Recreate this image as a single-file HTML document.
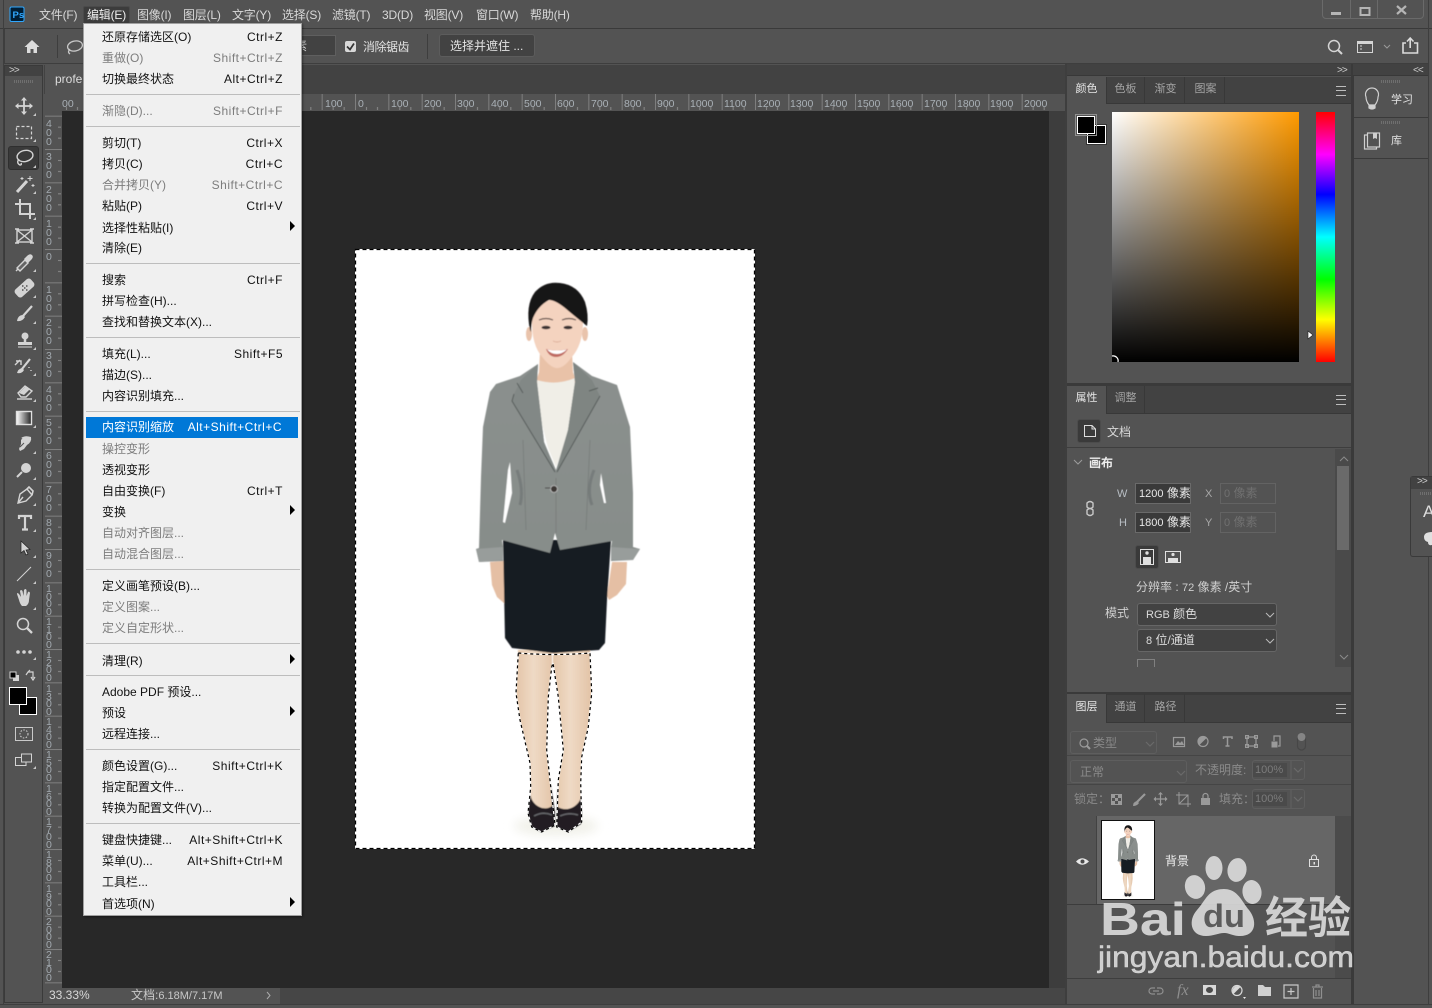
<!DOCTYPE html>
<html><head><meta charset="utf-8"><title>Photoshop</title>
<style>
html,body{margin:0;padding:0;background:#535353}
body{width:1432px;height:1008px;position:relative;overflow:hidden;font-family:"Liberation Sans","Noto Sans CJK SC",sans-serif;font-size:12px;color:#d8d8d8}
.a{position:absolute}
.t{position:absolute;white-space:nowrap;line-height:14px;height:14px}
svg{position:absolute;left:0;top:0;overflow:visible}
svg text{font-family:"Liberation Sans","Noto Sans CJK SC",sans-serif}
#menu{position:absolute;left:83px;top:23px;width:217px;height:891px;background:#f0f0f0;border:1px solid #a0a0a0;box-shadow:1px 1px 2px rgba(0,0,0,.4);z-index:20}
.m{position:absolute;left:0;margin-top:1px;width:181px;height:20px;line-height:20px;padding:0 17px 0 18px;color:#111;display:flex;justify-content:space-between;white-space:nowrap}
.m span+span{letter-spacing:.5px}
.m.x{color:#7d7d7d}
.m.h{background:#0078d7;color:#fff;left:2px;margin-top:0;width:180px;padding:0 16px 0 16px;height:21px;line-height:21px}
.s{position:absolute;left:2px;width:214px;height:1px;background:#bdbdbd}
.r{position:absolute;left:206px;width:0;height:0;border-left:5px solid #000;border-top:5px solid transparent;border-bottom:5px solid transparent}
.tab{position:absolute;height:27px;border-right:1px solid #383838;line-height:24px;text-align:center;color:#a4a4a4;width:38px;font-size:11px;text-indent:1px}
.tab.on{background:#535353;color:#e6e6e6;width:39px;text-indent:0}
.inp{position:absolute;height:19px;border:1px solid #6a6a6a;background:#3a3a3a;color:#e8e8e8;line-height:19px;padding-left:3px;box-sizing:content-box;white-space:nowrap;overflow:hidden;width:51px}
.inp.o{background:#535353;border-color:#636363;color:#707070}
.inp b{font-weight:normal;font-size:11px}
.sel{position:absolute;background:#424242;border:1px solid #666;border-radius:3px;height:21px;line-height:21px;box-sizing:content-box;color:#dcdcdc;padding-left:8px;white-space:nowrap}
.ham{position:absolute;width:10px;height:8px;border-top:1px solid #bdbdbd;border-bottom:1px solid #bdbdbd}
.ham:after{content:"";position:absolute;left:0;right:0;top:3px;height:1px;background:#bdbdbd}
.grip{position:absolute;width:19px;height:3px;background:repeating-linear-gradient(to right,#6f6f6f 0 1px,transparent 1px 2px)}
</style></head><body>

<!-- chrome backgrounds -->
<div class="a" style="left:0;top:0;width:1432px;height:28px;background:#535353;border-bottom:1px solid #3a3a3a"></div>
<div class="a" style="left:4px;top:29px;width:1424px;height:34px;background:#535353;border:1px solid #3e3e3e;border-width:0 0 1px 1px"></div>
<div class="a" style="left:44px;top:65px;width:1021px;height:29px;background:#424242"></div>
<div class="a" style="left:45px;top:65px;width:60px;height:29px;background:#535353"></div>
<div class="a" style="left:62px;top:111px;width:987px;height:877px;background:#282828"></div>
<div class="a" style="left:1049px;top:111px;width:16px;height:877px;background:#3d3d3d"></div>
<div class="a" style="left:45px;top:988px;width:1020px;height:16px;background:#535353"></div>
<div class="a" style="left:280px;top:988px;width:785px;height:16px;background:#464646"></div>

<!-- toolbar -->
<div class="a" style="left:4px;top:65px;width:39px;height:11px;background:#424242"></div>
<div class="a" style="left:4px;top:65px;width:39px;height:938px;border:1px solid #3a3a3a;box-sizing:border-box"></div>
<div class="a" style="left:8px;top:146px;width:31px;height:24px;background:#3a3a3a;border-radius:3px;border:1px solid #2f2f2f;box-sizing:border-box"></div>
<div class="grip" style="left:14px;top:80px"></div>
<div class="t" style="left:9px;top:64px;font-size:10px;color:#ccc;letter-spacing:-1px">&gt;&gt;</div>

<!-- rulers -->
<svg width="1432" height="1008" style="z-index:1">
<defs>
<pattern id="hr" patternUnits="userSpaceOnUse" x="355" y="94" width="33.333" height="17"><rect x="0" width="1" height="17" fill="#7e7e7e"/><rect x="11" y="13" width="1" height="3" fill="#8a8a8a"/><rect x="22" y="13" width="1" height="3" fill="#8a8a8a"/></pattern>
<pattern id="vr" patternUnits="userSpaceOnUse" x="45" y="249" width="17" height="33.333"><rect y="0" width="17" height="1" fill="#7e7e7e"/><rect y="11" x="13" width="3" height="1" fill="#8a8a8a"/><rect y="22" x="13" width="3" height="1" fill="#8a8a8a"/></pattern>
</defs>
<rect x="45" y="94" width="1020" height="17" fill="#535353"/>
<rect x="45" y="94" width="17" height="893" fill="#535353"/>
<rect x="62" y="94" width="987" height="16" fill="url(#hr)"/>
<rect x="45" y="111" width="17" height="876" fill="url(#vr)"/>
<g font-size="10.5" fill="#a9b0b6">
<text x="62" y="107">00</text><text x="325" y="107">100</text><text x="358" y="107">0</text><text x="391" y="107">100</text><text x="424" y="107">200</text><text x="457" y="107">300</text><text x="491" y="107">400</text><text x="524" y="107">500</text><text x="557" y="107">600</text><text x="591" y="107">700</text><text x="624" y="107">800</text><text x="657" y="107">900</text><text x="690" y="107">1000</text><text x="724" y="107">1100</text><text x="757" y="107">1200</text><text x="790" y="107">1300</text><text x="824" y="107">1400</text><text x="857" y="107">1500</text><text x="890" y="107">1600</text><text x="924" y="107">1700</text><text x="957" y="107">1800</text><text x="990" y="107">1900</text><text x="1024" y="107">2000</text>
</g>
<g font-size="10.5" fill="#a2a9af">
<text x="46 46 46" y="127 136 145">400</text>
<text x="46 46 46" y="160 169 178">300</text>
<text x="46 46 46" y="193 202 211">200</text>
<text x="46 46 46" y="227 236 245">100</text>
<text x="46" y="260">0</text>
<text x="46 46 46" y="293 302 311">100</text>
<text x="46 46 46" y="326 335 344">200</text>
<text x="46 46 46" y="359 368 377">300</text>
<text x="46 46 46" y="393 402 411">400</text>
<text x="46 46 46" y="426 435 444">500</text>
<text x="46 46 46" y="459 468 477">600</text>
<text x="46 46 46" y="493 502 511">700</text>
<text x="46 46 46" y="526 535 544">800</text>
<text x="46 46 46" y="559 568 577">900</text>
<text x="46 46 46 46" y="592 600 607 615">1000</text>
<text x="46 46 46 46" y="625 633 640 648">1100</text>
<text x="46 46 46 46" y="658 666 673 681">1200</text>
<text x="46 46 46 46" y="692 700 707 715">1300</text>
<text x="46 46 46 46" y="725 733 740 748">1400</text>
<text x="46 46 46 46" y="758 766 773 781">1500</text>
<text x="46 46 46 46" y="792 800 807 815">1600</text>
<text x="46 46 46 46" y="825 833 840 848">1700</text>
<text x="46 46 46 46" y="858 866 873 881">1800</text>
<text x="46 46 46 46" y="892 900 907 915">1900</text>
<text x="46 46 46 46" y="925 933 940 948">2000</text>
<text x="46 46 46 46" y="958 966 973 981">2100</text>
</g>
</svg>
<div class="t" style="left:55px;top:72px;color:#dcdcdc">profe</div>

<!-- document image -->
<div class="a" style="left:356px;top:250px;width:398px;height:598px;background:#fff;z-index:2"></div>
<svg width="1432" height="1008" style="z-index:3">
<defs>
<filter id="bl" x="-5%" y="-5%" width="110%" height="110%"><feGaussianBlur stdDeviation="0.45"/></filter>
<filter id="bl2" x="-20%" y="-50%" width="140%" height="200%"><feGaussianBlur stdDeviation="5"/></filter>
<linearGradient id="leg" x1="0" y1="0" x2="1" y2="0"><stop offset="0" stop-color="#e3c5a8"/><stop offset=".45" stop-color="#efdac5"/><stop offset="1" stop-color="#e2c3a6"/></linearGradient>
<linearGradient id="jk" x1="0" y1="0" x2="0" y2="1"><stop offset="0" stop-color="#8b908e"/><stop offset="1" stop-color="#878d8a"/></linearGradient>
<g id="woman">
<ellipse cx="556" cy="826" rx="42" ry="10" fill="#f1f1ea" filter="url(#bl2)"/>
<g filter="url(#bl)">
<!-- legs -->
<path d="M518 650 L552 650 L552 667 L548.500 697 L546.800 750 L550 780 L555 812 L530 812 L530.700 787 L530 763 L520 720 L516 693Z" fill="url(#leg)"/>
<path d="M553 650 L590 650 L591.700 693 L588 727 L581.500 757 L580.500 783 L581 812 L557 812 L558.500 780 L563.300 750 L558.300 697 L553 663Z" fill="url(#leg)"/>
<!-- shoes -->
<path d="M530.500 795 C532 806 545 812 552 806 L551 785 L555 812 L555 826 L541 832 L532 827 L528 813Z" fill="#201f22"/>
<path d="M557 788 L558 807 C566 812 577 808 581 798 L582 813 L581 824 L568 832 L557 827Z" fill="#201f22"/>
<path d="M534 816 Q543 811 552 815 M560 816 Q569 812 578 815" stroke="#66666a" stroke-width="1.500" fill="none"/>
<!-- hands -->
<path d="M490 562 L504 561 L509 580 L511 594 L509 607 L505 604 L497 597 L492 585Z" fill="#e5bfa4"/>
<path d="M612 562 L627 562 L626 584 L617 595 L609 600 L607 596Z" fill="#e5bfa4"/>
<!-- skirt -->
<path d="M503 540 L611 540 L607 600 L605 643 L599 650 L553 653 L512 648 L505 638Z" fill="#161a22"/>
<!-- neck and blouse -->
<path d="M540 352 L572 352 L573 372 L576 382 L556 392 L536 382 L539 372Z" fill="#e9c2a8"/>
<path d="M537 380 Q556 386 575 378 L571 430 L556 467 L548 448 L541 420Z" fill="#f0eee7"/>
<!-- jacket -->
<path d="M538 364 L520 376 L496 384 L490 392 L483 427 L481 477 L479 548 L476 549 L479 562 L503 561 L503 547 L502 540 L550 553 L555 533 L560 550 L612 541 L611 547 L611 561 L633 560 L640 549 L633 547 L633 493 L630 427 L617 385 L592 376 L573 362 L575 382 L568 430 L556 470 L544 442 L537 382Z" fill="url(#jk)"/>
<path d="M510 462 L512 493 L505 523 L503 522 L508 470Z M601 473 L606 503 L604 503 L600 485Z" fill="#fff"/>
<path d="M538 364 L521 380 L514 394 L512 401 L556 474 L544 442 L537 382Z" fill="#828886"/>
<path d="M573 362 L592 380 L598 392 L600 396 L556 474 L568 430 L575 382Z" fill="#7f8582"/>
<path d="M514 394 L512 401 L555 472 M600 396 L557 472 M517 383 L523 393 M598 388 L589 391" stroke="#565b5a" stroke-width="1" fill="none"/>
<path d="M517 470 Q524 490 520 505 M594 470 Q586 490 592 505" stroke="#6f7573" stroke-width="3" fill="none" opacity=".7"/>
<path d="M556 478 L556 533 M523 440 L526 530 M590 440 L586 530" stroke="#6a706e" stroke-width=".8" fill="none" opacity=".6"/>
<path d="M545 488 L551 488" stroke="#444" stroke-width="1"/>
<circle cx="554" cy="489" r="3.500" fill="#3c3834" stroke="#d8d8d8" stroke-width=".6"/>
<path d="M476 549 L503 547 L503 560 L479 562Z M611 547 L640 549 L633 560 L611 560Z" fill="#989d9b"/>
<!-- head -->
<ellipse cx="529" cy="334" rx="3" ry="7" fill="#e9c3ab"/>
<ellipse cx="585" cy="334" rx="3" ry="7" fill="#e9c3ab"/>
<path d="M532 318 Q531 345 543 358 Q551 368 557 368 Q564 368 571 358 Q583 345 583 322 Q570 295 550 300 Q535 305 532 318Z" fill="#f4d3bf"/>
<path d="M530 330 Q525 305 535 292 Q545 281 560 283 Q578 285 585 302 Q589 315 587 326 L582 322 Q572 314 565 308 Q555 300 549 300 Q538 306 533 318 Q531 324 531 332Z" fill="#191415"/>
<ellipse cx="546" cy="327.500" rx="4.500" ry="1.800" fill="#3a3030"/>
<ellipse cx="568" cy="327.500" rx="4.500" ry="1.800" fill="#3a3030"/>
<path d="M539 320 Q546 317 553 320 M562 320 Q569 317 576 320" stroke="#5a4a45" stroke-width="1.200" fill="none"/>
<path d="M546 349 Q557 352 568 349 Q563 357 556 357 Q549 357 546 349Z" fill="#bf6a62"/>
<path d="M547 349.500 Q557 351.500 567 349.500 Q562 354 557 354 Q551 354 547 349.500Z" fill="#fff"/>
<path d="M553 341 Q557 343 561 341" stroke="#dcae98" stroke-width=".9" fill="none"/>
</g>
</g>
</defs>
<use href="#woman"/>
<!-- marching ants -->
<path d="M518.300 653 Q553 656 590 653 L591.700 693 L588.300 727 L581.700 757 L580.700 783 L581.700 822 L568.300 832 L556.700 827 L558.300 780 L563.300 750 L558.300 697 L553 663 L551.700 667 L548.300 697 L546.700 750 L550 780 L555 825 L541.700 832 L531.700 827 L528 813 L530.700 787 L530 763 L520 720 L516 693Z" fill="none" stroke="#fff" stroke-width="1.200"/>
<path d="M518.300 653 Q553 656 590 653 L591.700 693 L588.300 727 L581.700 757 L580.700 783 L581.700 822 L568.300 832 L556.700 827 L558.300 780 L563.300 750 L558.300 697 L553 663 L551.700 667 L548.300 697 L546.700 750 L550 780 L555 825 L541.700 832 L531.700 827 L528 813 L530.700 787 L530 763 L520 720 L516 693Z" fill="none" stroke="#000" stroke-width="1.200" stroke-dasharray="3 3"/>
<rect x="355.500" y="249.500" width="399" height="599" fill="none" stroke="#fff"/>
<rect x="355.500" y="249.500" width="399" height="599" fill="none" stroke="#000" stroke-width="1.300" stroke-dasharray="4 3"/>
</svg>

<!-- menu bar -->
<svg width="24" height="24"><rect x="10" y="7" width="14" height="14.500" rx="1.500" fill="#001e36" stroke="#31a8ff" stroke-width="1"/><text x="12.500" y="18" font-size="9.500" font-weight="bold" fill="#31a8ff">Ps</text></svg>
<div class="a" style="left:83px;top:6px;width:47px;height:18px;background:#3c3c3c;border:1px solid #4a4a4a;box-sizing:border-box;border-radius:2px"></div>
<div class="t" style="left:39px;top:8px;letter-spacing:-.2px">文件(F)</div>
<div class="t" style="left:87px;top:8px;color:#eee;letter-spacing:-.2px">编辑(E)</div>
<div class="t" style="left:137px;top:8px;letter-spacing:-.2px">图像(I)</div>
<div class="t" style="left:183px;top:8px;letter-spacing:-.2px">图层(L)</div>
<div class="t" style="left:232px;top:8px;letter-spacing:-.2px">文字(Y)</div>
<div class="t" style="left:282px;top:8px;letter-spacing:-.2px">选择(S)</div>
<div class="t" style="left:332px;top:8px;letter-spacing:-.2px">滤镜(T)</div>
<div class="t" style="left:382px;top:8px;letter-spacing:-.2px">3D(D)</div>
<div class="t" style="left:424px;top:8px;letter-spacing:-.2px">视图(V)</div>
<div class="t" style="left:476px;top:8px;letter-spacing:-.2px">窗口(W)</div>
<div class="t" style="left:530px;top:8px;letter-spacing:-.2px">帮助(H)</div>

<!-- window controls -->
<div class="a" style="left:1322px;top:-2px;width:102px;height:21px;border:1px solid #6a6a6a;border-radius:0 0 4px 4px;box-sizing:border-box"></div>
<div class="a" style="left:1350px;top:0;width:1px;height:18px;background:#6a6a6a"></div>
<div class="a" style="left:1377px;top:0;width:1px;height:18px;background:#6a6a6a"></div>
<svg width="1432" height="30">
<rect x="1331" y="12" width="10" height="3" fill="#b5b5b5"/>
<rect x="1360.500" y="8" width="9" height="7" fill="none" stroke="#b5b5b5" stroke-width="2"/>
<path d="M1397 6 L1406 14 M1406 6 L1397 14" stroke="#b5b5b5" stroke-width="2.200"/>
</svg>

<!-- options bar -->
<svg width="1432" height="70">
<path d="M24.500 47 L32 40 L39.500 47 H37 V53 H33.500 V49 H30.500 V53 H27 V47Z" fill="#dcdcdc"/>
<rect x="57" y="35" width="1" height="23" fill="#3e3e3e"/>
<ellipse cx="75" cy="46" rx="7.500" ry="5" fill="none" stroke="#c8c8c8" stroke-width="1.300" transform="rotate(-12 75 46)"/>
<path d="M70 49 Q67 52 70 54" fill="none" stroke="#c8c8c8" stroke-width="1.300"/>
<rect x="427" y="34" width="1" height="25" fill="#3e3e3e"/>
<circle cx="1334" cy="46" r="5.500" fill="none" stroke="#d4d4d4" stroke-width="1.500"/>
<path d="M1338 50 L1342 54" stroke="#d4d4d4" stroke-width="2"/>
<rect x="1357.500" y="41.500" width="15" height="11" fill="none" stroke="#d4d4d4" stroke-width="1"/><rect x="1358" y="42" width="15" height="2" fill="#d4d4d4"/>
<path d="M1360 46 h2 M1360 49 h2" stroke="#d4d4d4"/>
<path d="M1384 45 L1387 48 L1390 45" fill="none" stroke="#9a9a9a" stroke-width="1"/>
<path d="M1406 43 H1403 V53 H1417.500 V43 H1414 M1410.200 48 V39 M1407 41.500 L1410.200 38 L1413.500 41.500" fill="none" stroke="#dcdcdc" stroke-width="1.600"/>
</svg>
<div class="a" style="left:295px;top:35px;width:41px;height:21px;background:#424242;border:1px solid #5f5f5f;box-sizing:border-box"></div>
<div class="t" style="left:295px;top:39px">素</div>
<div class="a" style="left:345px;top:41px;width:11px;height:11px;background:#d8d8d8;border-radius:2px"></div>
<svg width="1432" height="70"><path d="M347 46.500 L350 49.500 L354 43.500" fill="none" stroke="#333" stroke-width="1.700"/></svg>
<div class="t" style="left:363px;top:40px;color:#e0e0e0;letter-spacing:-.5px">消除锯齿</div>
<div class="a" style="left:439px;top:34px;width:96px;height:23px;background:#424242;border:1px solid #5c5c5c;border-radius:3px;box-sizing:border-box"></div>
<div class="t" style="left:450px;top:39px;color:#e4e4e4">选择并遮住 ...</div>

<!-- tool icons -->
<svg width="60" height="780" fill="none" stroke="#d4d4d4" stroke-width="1.400">
<!-- move -->
<path d="M24 98 V114 M16 106 H32" stroke-width="1.800"/><path d="M24 97 L21 100.500 H27Z M24 115 L21 111.500 H27Z M15 106 L18.500 103 V109Z M33 106 L29.500 103 V109Z" fill="#d4d4d4" stroke="none"/>
<!-- marquee -->
<rect x="16.500" y="126.500" width="15" height="12" stroke-dasharray="3 2" stroke-width="1.200"/>
<!-- lasso -->
<ellipse cx="25" cy="156" rx="8" ry="5.500" transform="rotate(-12 25 156)"/><path d="M19 159 Q16 163 20 165 Q22 165 21 163"/>
<!-- wand -->
<path d="M17 192 L27 181" stroke-width="3"/><path d="M30 176 v5 M27.500 178.500 h5 M22 177 v3 M20.500 178.500 h3 M33 184 v3 M31.500 185.500 h3" stroke-width="1"/>
<!-- crop -->
<path d="M15 204 H30 V219 M20 199 V214 H35" stroke-width="2"/>
<!-- frame -->
<rect x="17" y="230" width="15" height="12"/><path d="M17 230 L32 242 M32 230 L17 242"/><path d="M15 229 h4 M30 229 h4 M15 243 h4 M30 243 h4" stroke-width="1.500"/>
<!-- eyedropper -->
<path d="M18 269 L16 271 M17 268 L25 260 L28 263 L20 271 Z" fill="#d4d4d4" fill-opacity=".15"/><path d="M24 259 L27 256 Q30 253 32 255 Q34 257 31 260 L28 263Z" fill="#d4d4d4" stroke="none"/>
<!-- heal -->
<rect x="14" y="283" width="21" height="10" rx="3" transform="rotate(-42 24.500 288)" fill="#d4d4d4" stroke="none"/>
<path d="M22 286 h1.500 M26 286 h1.500 M22 290 h1.500 M26 290 h1.500 M24 288 h1.500" stroke="#535353" stroke-width="1.600"/>
<!-- brush -->
<path d="M32 306 L23 316" stroke-width="2.200"/><path d="M23 315 Q18 315 17 321 Q22 322 25 317Z" fill="#d4d4d4" stroke="none"/>
<!-- stamp -->
<circle cx="25" cy="336" r="3.500" fill="#d4d4d4" stroke="none"/><path d="M25 338 v4" stroke-width="2.500"/><rect x="18" y="342" width="14" height="3" fill="#d4d4d4" stroke="none"/><path d="M18 347 h14" stroke-width="1"/>
<!-- history -->
<path d="M30 359 L22 369" stroke-width="2.200"/><path d="M22 368 Q18 369 17 373 Q22 374 24 370Z" fill="#d4d4d4" stroke="none"/><path d="M15 365 L20 360 M16 361 h5 v4"/><path d="M29 367 v1 M31 370 v1" stroke-dasharray="1 2"/>
<!-- eraser -->
<path d="M18 393 L25 386 L32 391 L26 397 H21Z" /><path d="M18 393 L25 386 L29 389 L23 395Z" fill="#d4d4d4" stroke="none" transform="translate(1 0)"/><path d="M17 399 H32"/>
<!-- gradient -->
<defs><linearGradient id="gr" x1="0" x2="1"><stop offset="0" stop-color="#fff"/><stop offset="1" stop-color="#222"/></linearGradient></defs>
<rect x="16.500" y="411.500" width="15" height="13" fill="url(#gr)" stroke="#e0e0e0"/>
<!-- smudge -->
<path d="M21 438 Q25 435 31 437 Q32 442 27 445 L24 449 L20 451 L19 449 L21 444Z" fill="#d4d4d4" stroke="none"/><path d="M19 442 L22 438 M20 447 L24 443" stroke="#535353" stroke-width="1"/>
<!-- dodge -->
<circle cx="26" cy="468" r="5" fill="#d4d4d4" stroke="none"/><path d="M22 472 L17 477" stroke-width="2"/>
<!-- pen -->
<path d="M18 503 L20 494 L27 489 L32 495 L26 501 Z M18 503 L23 497"/><path d="M27 489 L29 487 L33 491 L32 495" stroke-width="1.600"/>
<!-- T -->
<path d="M19 519 V516 H31 V519 M25 516 V529 M22 529.500 H28" stroke-width="2.200"/>
<!-- path sel -->
<path d="M21 541 L21 553 L24 550.500 L26 555 L28 554 L26 550 L30 549.500Z" fill="#d4d4d4" stroke="#222" stroke-width=".7"/>
<!-- line -->
<path d="M17 581 L31 567" stroke-width="1"/>
<!-- hand -->
<path d="M19 600 L17 594 Q17 592 19 594 L21 597 L20 591 Q21 589 22.500 591 L23.500 596 L24 590 Q25.500 588 26.500 590 L26.500 596 L28 592 Q29.500 591 30 593 L29 600 Q29 604 26 606 H22 Q20 604 19 600Z" fill="#d4d4d4" stroke="none"/>
<!-- zoom -->
<circle cx="23" cy="624" r="5.500" stroke-width="1.500"/><path d="M27 628 L32 633" stroke-width="2.300"/>
<!-- dots -->
<circle cx="18" cy="652" r="1.800" fill="#d4d4d4" stroke="none"/><circle cx="24" cy="652" r="1.800" fill="#d4d4d4" stroke="none"/><circle cx="30" cy="652" r="1.800" fill="#d4d4d4" stroke="none"/>
<!-- defaults -->
<rect x="13" y="675" width="6" height="6" fill="#d4d4d4" stroke="none"/><rect x="10" y="672" width="6" height="6" fill="#000" stroke="#d4d4d4" stroke-width="1"/>
<path d="M28 672 H33 V678 M26 675 L28 672 L30 670 M31 677 L33 680 L35 677" stroke-width="1.200"/>
<!-- quick mask -->
<rect x="15.500" y="727.500" width="17" height="13" stroke="#c9c9c9" stroke-width="1"/><circle cx="24" cy="734" r="4" stroke-dasharray="1.500 1.500" stroke-width="1"/>
<!-- screen -->
<rect x="21.500" y="754" width="10" height="8" stroke-width="1"/><path d="M21 757.500 H15.500 V765.500 H26 V762" stroke-width="1"/>
</svg>
<svg width="60" height="780"><g fill="#c8c8c8">
<path d="M36 113 l-3 3 h3Z M36 139 l-3 3 h3Z M36 165 l-3 3 h3Z M36 191 l-3 3 h3Z M36 217 l-3 3 h3Z M36 269 l-3 3 h3Z M36 295 l-3 3 h3Z M36 321 l-3 3 h3Z M36 347 l-3 3 h3Z M36 373 l-3 3 h3Z M36 399 l-3 3 h3Z M36 425 l-3 3 h3Z M36 451 l-3 3 h3Z M36 477 l-3 3 h3Z M36 503 l-3 3 h3Z M36 529 l-3 3 h3Z M36 555 l-3 3 h3Z M36 581 l-3 3 h3Z M36 607 l-3 3 h3Z M36 657 l-3 3 h3Z M36 766 l-3 3 h3Z"/></g></svg>
<div class="a" style="left:19px;top:697px;width:18px;height:18px;background:#000;border:1px solid #fff;box-sizing:border-box"></div>
<div class="a" style="left:9px;top:687px;width:18px;height:18px;background:#000;border:1px solid #fff;box-sizing:border-box"></div>

<!-- status bar -->
<div class="t" style="left:49px;top:988px;color:#d8d8d8">33.33%</div>
<div class="t" style="left:131px;top:988px;color:#c8c8c8">文档:<span style="font-size:11px">6.18M/7.17M</span></div>
<svg width="1432" height="1008"><path d="M267 992 L270 995.500 L267 999" fill="none" stroke="#aaa"/></svg>

<!-- right dock -->
<div class="a" style="left:1065px;top:64px;width:367px;height:944px;background:#535353"></div>
<div class="a" style="left:1065px;top:64px;width:363px;height:12px;background:#424242;border-bottom:1px solid #383838;box-sizing:border-box"></div>
<div class="a" style="left:1065px;top:64px;width:2px;height:940px;background:#3e3e3e"></div>
<div class="a" style="left:1351px;top:64px;width:2px;height:940px;background:#3a3a3a"></div>
<div class="a" style="left:1428px;top:0;width:1px;height:1004px;background:#3e3e3e"></div>
<div class="a" style="left:0;top:1004px;width:1432px;height:1px;background:#3e3e3e"></div>
<div class="a" style="left:3px;top:0;width:1px;height:1004px;background:#3e3e3e"></div>
<div class="t" style="left:1337px;top:64px;font-size:10px;color:#ccc;letter-spacing:-1px">&gt;&gt;</div>
<div class="t" style="left:1413px;top:64px;font-size:10px;color:#ccc;letter-spacing:-1px">&lt;&lt;</div>

<!-- color panel -->
<div class="a" style="left:1067px;top:77px;width:284px;height:27px;background:#424242;border-bottom:1px solid #383838;box-sizing:border-box"></div>
<div class="tab on" style="left:1067px;top:77px">颜色</div>
<div class="tab" style="left:1106px;top:77px">色板</div>
<div class="tab" style="left:1146px;top:77px">渐变</div>
<div class="tab" style="left:1186px;top:77px">图案</div>
<div class="ham" style="left:1336px;top:86px"></div>
<div class="a" style="left:1075px;top:114px;width:22px;height:22px;border:1px solid #909090;box-sizing:border-box;z-index:1"></div>
<div class="a" style="left:1087px;top:125px;width:19px;height:19px;background:#000;border:1px solid #fff;outline:1px solid #333;box-sizing:border-box"></div>
<div class="a" style="left:1077px;top:116px;width:18px;height:18px;background:#000;border:1px solid #fff;box-sizing:border-box"></div>
<div class="a" style="left:1112px;top:112px;width:187px;height:250px;background:linear-gradient(to top,#000,rgba(0,0,0,0)),linear-gradient(to right,#fff,#ff9a00)"></div>
<div class="a" style="left:1316px;top:112px;width:19px;height:250px;background:linear-gradient(to bottom,#f00 0,#f0f 17%,#00f 33%,#0ff 50%,#0f0 67%,#ff0 83%,#f00 100%)"></div>
<svg width="1432" height="400"><path d="M1308 331 L1313 335 L1308 339Z" fill="#fff" stroke="#222" stroke-width=".6"/><path d="M1112 356 A5 5 0 0 1 1118 362" fill="none" stroke="#fff" stroke-width="1.200"/></svg>
<div class="a" style="left:1067px;top:383px;width:284px;height:3px;background:#3a3a3a"></div>

<!-- learn/library -->
<div class="grip" style="left:1381px;top:80px"></div>
<div class="grip" style="left:1381px;top:121px"></div>
<div class="a" style="left:1354px;top:117px;width:74px;height:1px;background:#3a3a3a"></div>
<div class="a" style="left:1354px;top:158px;width:74px;height:1px;background:#3a3a3a"></div>
<div class="a" style="left:1353px;top:76px;width:1px;height:928px;background:#3a3a3a"></div>
<div class="t" style="left:1391px;top:93px;color:#e4e4e4;font-size:11px">学习</div>
<div class="t" style="left:1391px;top:134px;color:#e4e4e4;font-size:11px">库</div>
<svg width="1432" height="170" fill="none" stroke="#d0d0d0" stroke-width="1.200">
<path d="M1369 105 Q1366 101 1366 97 A6.500 6.500 0 1 1 1378 97 Q1378 101 1375 105Z"/><path d="M1369 106 h6 v2 q-3 2 -6 0Z" fill="#d0d0d0"/>
<rect x="1364.500" y="135" width="12" height="14"/><rect x="1367.500" y="133" width="12" height="14" fill="#535353"/><path d="M1373 133 h4 v6 l-2 -1 l-2 1Z" fill="#d0d0d0" stroke="none"/>
</svg>

<!-- properties -->
<div class="a" style="left:1067px;top:386px;width:284px;height:28px;background:#424242;border-bottom:1px solid #383838;box-sizing:border-box"></div>
<div class="tab on" style="left:1067px;top:386px;height:28px">属性</div>
<div class="tab" style="left:1106px;top:386px;height:27px">调整</div>
<div class="ham" style="left:1336px;top:395px"></div>
<div class="a" style="left:1077px;top:419px;width:24px;height:24px;background:#3a3a3a;border-radius:3px;border:1px solid #4c4c4c;box-sizing:border-box"></div>
<div class="t" style="left:1107px;top:425px">文档</div>
<div class="a" style="left:1067px;top:447px;width:284px;height:1px;background:#3e3e3e"></div>
<div class="a" style="left:1335px;top:449px;width:16px;height:218px;background:#4a4a4a"></div>
<div class="a" style="left:1337px;top:466px;width:12px;height:84px;background:#6a6a6a"></div>
<svg width="1432" height="680" fill="none" stroke="#dcdcdc">
<path d="M1084.500 425.500 H1092 L1095.500 429 V436.500 H1084.500Z M1092 425.500 V429 H1095.500"/>
<path d="M1087 503 Q1090 500 1093 503 V507 Q1090 510 1087 507Z M1087 510 Q1090 507 1093 510 V514 Q1090 517 1087 514Z" stroke-width="1.400" stroke="#c8c8c8"/>
<path d="M1074 460 L1078 464 L1082 460" stroke="#9c9c9c"/>
<path d="M1340 461 L1344 457 L1348 461 M1340 655 L1344 659 L1348 655" stroke="#8a8a8a"/>
</svg>
<div class="t" style="left:1089px;top:456px;font-weight:bold;color:#eee">画布</div>
<div class="t" style="left:1117px;top:487px;font-size:11px;color:#b8bec4">W</div>
<div class="inp" style="left:1135px;top:483px"><b>1200</b> 像素</div>
<div class="t" style="left:1205px;top:487px;font-size:11px;color:#a8a8a8">X</div>
<div class="inp o" style="left:1220px;top:483px"><b>0</b> 像素</div>
<div class="t" style="left:1119px;top:516px;font-size:11px;color:#b8bec4">H</div>
<div class="inp" style="left:1135px;top:512px"><b>1800</b> 像素</div>
<div class="t" style="left:1205px;top:516px;font-size:11px;color:#a8a8a8">Y</div>
<div class="inp o" style="left:1220px;top:512px"><b>0</b> 像素</div>
<div class="a" style="left:1135px;top:545px;width:24px;height:24px;background:#3a3a3a;border-radius:3px;border:1px solid #4c4c4c;box-sizing:border-box"></div>
<div class="t" style="left:1136px;top:580px;color:#cfcfcf">分辨率 : <span style="font-size:11px">72</span> 像素 /英寸</div>
<div class="t" style="left:1105px;top:606px;color:#cfcfcf">模式</div>
<div class="sel" style="left:1137px;top:603px;width:130px"><span style="font-size:11px">RGB</span> 颜色</div>
<div class="sel" style="left:1137px;top:629px;width:130px"><span style="font-size:11px">8</span> 位/通道</div>
<svg width="1432" height="680">
<rect x="1140.500" y="549.500" width="13" height="15" fill="none" stroke="#e0e0e0"/><circle cx="1147" cy="553" r="1.700" fill="#e0e0e0"/><path d="M1143 564 V557 H1151 V564Z" fill="#e0e0e0"/>
<rect x="1165.500" y="551.500" width="15" height="11" fill="none" stroke="#e0e0e0"/><circle cx="1173" cy="554.500" r="1.600" fill="#e0e0e0"/><path d="M1168 562 V558 H1178 V562Z" fill="#e0e0e0"/>
<path d="M1266 613 L1270 617 L1274 613 M1266 639 L1270 643 L1274 639" fill="none" stroke="#bbb"/>
<path d="M1137.500 667 V659.500 H1154.500 V667" fill="none" stroke="#808080"/>
</svg>

<!-- layers -->
<div class="a" style="left:1067px;top:692px;width:284px;height:3px;background:#3a3a3a"></div>
<div class="a" style="left:1067px;top:695px;width:284px;height:28px;background:#424242;border-bottom:1px solid #383838;box-sizing:border-box"></div>
<div class="tab on" style="left:1067px;top:694px;height:29px;line-height:26px">图层</div>
<div class="tab" style="left:1106px;top:694px;height:28px;line-height:26px">通道</div>
<div class="tab" style="left:1146px;top:694px;height:28px;line-height:26px">路径</div>
<div class="ham" style="left:1336px;top:704px"></div>
<div class="a" style="left:1070px;top:731px;width:87px;height:23px;border:1px solid #5e5e5e;border-radius:3px;box-sizing:border-box"></div>
<div class="t" style="left:1093px;top:736px;color:#888">类型</div>
<div class="a" style="left:1067px;top:755px;width:284px;height:1px;background:#454545"></div>
<div class="a" style="left:1070px;top:760px;width:117px;height:23px;border:1px solid #5e5e5e;border-radius:3px;box-sizing:border-box"></div>
<div class="t" style="left:1080px;top:765px;color:#8a8a8a">正常</div>
<div class="t" style="left:1195px;top:763px;color:#8a8a8a">不透明度:</div>
<div class="a" style="left:1252px;top:760px;width:53px;height:20px;border:1px solid #5e5e5e;border-radius:3px;box-sizing:border-box"></div>
<div class="a" style="left:1253px;top:763px;width:34px;height:14px;background:#4a4a4a;color:#7c7c7c;line-height:14px;padding-left:2px;font-size:11px;box-sizing:border-box">100%</div>
<div class="a" style="left:1067px;top:784px;width:284px;height:1px;background:#454545"></div>
<div class="t" style="left:1074px;top:792px;color:#8a8a8a">锁定：</div>
<div class="t" style="left:1219px;top:792px;color:#8a8a8a">填充：</div>
<div class="a" style="left:1252px;top:789px;width:53px;height:20px;border:1px solid #5e5e5e;border-radius:3px;box-sizing:border-box"></div>
<div class="a" style="left:1253px;top:792px;width:34px;height:14px;background:#4a4a4a;color:#7c7c7c;line-height:14px;padding-left:2px;font-size:11px;box-sizing:border-box">100%</div>
<div class="a" style="left:1097px;top:816px;width:238px;height:88px;background:#666"></div>
<div class="a" style="left:1335px;top:816px;width:16px;height:162px;background:#4b4b4b"></div>
<div class="a" style="left:1067px;top:904px;width:268px;height:1px;background:#3c3c3c"></div>
<div class="a" style="left:1096px;top:816px;width:1px;height:88px;background:#424242"></div>
<div class="a" style="left:1101px;top:820px;width:54px;height:80px;background:#fff;border:1px solid #111;box-sizing:border-box"></div>
<svg width="1432" height="1008"><use href="#woman" transform="translate(1102 821) scale(.13) translate(-356 -250)"/></svg>
<div class="t" style="left:1165px;top:854px;color:#eee">背景</div>
<div class="a" style="left:1067px;top:978px;width:284px;height:1px;background:#3e3e3e"></div>

<svg width="1432" height="1008">
<g fill="none" stroke="#9a9a9a" stroke-width="1.200">
<circle cx="1084" cy="743" r="4"/><path d="M1087 746 L1090 749" stroke-width="2"/>
<rect x="1173.500" y="737.500" width="11" height="9"/><path d="M1175 745 L1178 741 L1180 743 L1182 741 L1184 745Z" fill="#9a9a9a" stroke="none"/>
<circle cx="1203" cy="741.500" r="5"/><path d="M1203 736.500 A5 5 0 0 1 1203 746.500Z" transform="rotate(-135 1203 741.500)" fill="#9a9a9a" stroke="none"/>
<path d="M1223.500 739 V737 H1232 V739 M1227.500 737 V746 M1225.500 746 H1229.500" stroke-width="1.500"/>
<rect x="1247" y="737" width="9" height="9"/><path d="M1245.500 735.500 h3 v3 h-3Z M1254.500 735.500 h3 v3 h-3Z M1245.500 744.500 h3 v3 h-3Z M1254.500 744.500 h3 v3 h-3Z" stroke-width="1"/>
<path d="M1274 741 V736 H1280 V746 H1278"/><rect x="1271.500" y="741.500" width="6" height="6" fill="#9a9a9a" stroke="none"/>
<rect x="1297.500" y="734" width="8" height="16" rx="4" stroke="#474747"/>
<path d="M1177 771 L1181 775 L1185 771 M1294 768 L1298 772 L1302 768 M1294 797 L1298 801 L1302 797" stroke="#6a6a6a"/>
<path d="M1291 760 v20 M1291 789 v20" stroke="#5e5e5e"/>
<path d="M1146 742 L1150 746 L1154 742" stroke="#6a6a6a"/>
<rect x="1111.500" y="794.500" width="10" height="10" stroke-width="1"/><path d="M1112 795 h3 v3 h-3Z M1118 795 h3 v3 h-3Z M1115 798 h3 v3 h-3Z M1112 801 h3 v3 h-3Z M1118 801 h3 v3 h-3Z" fill="#9a9a9a" stroke="none"/>
<path d="M1145 794 L1137 802" stroke-width="2.200"/><path d="M1137 801 Q1133 802 1133 806 Q1137 806 1139 803Z" fill="#9a9a9a" stroke="none"/>
<path d="M1160.500 793 V805 M1154.500 799 H1166.500"/><path d="M1160.500 792 L1158 794.500 H1163Z M1160.500 806 L1158 803.500 H1163Z M1153.500 799 L1156 796.500 V801.500Z M1167.500 799 L1165 796.500 V801.500Z" fill="#9a9a9a" stroke="none"/>
<path d="M1179 795 H1188 V804 H1179Z M1176 795 H1179 M1188 804 H1191 M1179 792 V795 M1188 804 V807 M1179 804 L1188 795" stroke-width="1"/>
<rect x="1201" y="798" width="9" height="7" fill="#9a9a9a" stroke="none"/><path d="M1203 798 V796 A2.500 2.500 0 0 1 1208 796 V798"/>
</g>
<circle cx="1301.500" cy="737" r="4" fill="#858585"/>
<!-- eye -->
<path d="M1076 861.500 Q1082 855 1089 861.500 Q1082 868 1076 861.500Z" fill="#e8e8e8"/><circle cx="1082.500" cy="861.500" r="2" fill="#4a4a4a"/>
<!-- lock -->
<rect x="1309.500" y="859.500" width="9" height="7" fill="none" stroke="#e0e0e0"/><path d="M1311.500 859 V857.500 A2.500 2.500 0 0 1 1316.500 857.500 V859" fill="none" stroke="#e0e0e0"/><rect x="1313.500" y="862" width="1.500" height="2.500" fill="#e0e0e0"/>
<!-- bottom icons -->
<g fill="none" stroke="#8f8f8f" stroke-width="1.200">
<path d="M1155 988 H1152 A3 3 0 0 0 1152 994 H1155 M1157 988 H1160 A3 3 0 0 1 1160 994 H1157 M1153 991 H1159"/>
<path d="M1284 987 h14 v13 h-14Z M1291 990 v7 M1287.500 993.500 h7" transform="translate(0 -2)" stroke="#c8c8c8" />
<path d="M1312 987 h11 M1316 987 v-2 h3 v2 M1313.500 988 v10 h8 v-10 M1316 990 v6 M1319 990 v6"/>
</g>
<rect x="1203" y="985" width="13" height="10" fill="#d8d8d8"/><ellipse cx="1209.500" cy="990" rx="3.500" ry="3" fill="#4a4a4a"/>
<circle cx="1237" cy="990.500" r="5" fill="none" stroke="#d8d8d8" stroke-width="1.200"/><path d="M1233.500 994 L1240.500 987 A5 5 0 0 0 1233.500 994Z" fill="#d8d8d8"/>
<path d="M1243 997 h3 l-1.500 2Z" fill="#e8e8e8"/>
<path d="M1258 985 H1263 L1265 987 H1271 V996 H1258Z" fill="#d0d0d0"/>
</svg>
<div class="t" style="left:1177px;top:984px;font:italic 16px 'Liberation Serif',serif;color:#8f8f8f;line-height:14px">fx</div>

<!-- floating mini panel -->
<div class="a" style="left:1410px;top:476px;width:22px;height:81px;background:#535353;border:1px solid #3a3a3a;border-right:0;border-radius:3px 0 0 3px;box-sizing:border-box"></div>
<div class="a" style="left:1411px;top:477px;width:21px;height:12px;background:#424242"></div>
<div class="t" style="left:1417px;top:475px;font-size:10px;color:#ccc;letter-spacing:-1px">&gt;&gt;</div>
<div class="grip" style="left:1420px;top:492px;width:12px"></div>
<div class="t" style="left:1423px;top:504px;font-size:17px;color:#ddd;line-height:16px;height:16px">A</div>
<svg width="1432" height="600"><path d="M1424 537 Q1424 532 1432 532 V545 Q1428 546 1428 542 Q1424 541 1424 537Z" fill="#e0e0e0"/></svg>

<!-- watermark -->
<svg width="1432" height="1008" style="z-index:10">
<g fill="#d9d9d9" fill-opacity=".92">
<text x="1100" y="935" font-size="46" font-weight="bold" textLength="86" lengthAdjust="spacingAndGlyphs">Bai</text>
<ellipse cx="1195" cy="887" rx="10" ry="12" transform="rotate(-15 1195 887)"/>
<ellipse cx="1214" cy="868" rx="8.500" ry="12"/>
<ellipse cx="1237" cy="870" rx="9.500" ry="12" transform="rotate(10 1237 870)"/>
<ellipse cx="1252" cy="892" rx="9.500" ry="12" transform="rotate(-8 1252 892)"/>
<path d="M1224 889 C1238 889 1242 902 1249 910 C1257 920 1257 936 1240 936 C1232 936 1230 933 1224 933 C1218 933 1214 936 1206 936 C1190 936 1188 920 1197 910 C1206 900 1208 889 1224 889Z"/>
<text x="1265" y="933" font-size="44" font-weight="bold" font-family="'Noto Sans CJK SC',sans-serif" textLength="86" lengthAdjust="spacingAndGlyphs">经验</text>
<text x="1098" y="967" font-size="30" textLength="256" lengthAdjust="spacingAndGlyphs" stroke="#d9d9d9" stroke-width=".5">jingyan.baidu.com</text>
</g>
<text x="1203" y="927" font-size="32" font-weight="bold" fill="#5c5c5c" textLength="42" lengthAdjust="spacingAndGlyphs">du</text>
</svg>

<!-- menu -->
<div id="menu">
<div class="m" style="top:2px"><span>还原存储选区(O)</span><span>Ctrl+Z</span></div>
<div class="m x" style="top:23px"><span>重做(O)</span><span>Shift+Ctrl+Z</span></div>
<div class="m" style="top:44px"><span>切换最终状态</span><span>Alt+Ctrl+Z</span></div>
<div class="s" style="top:70px"></div>
<div class="m x" style="top:76px"><span>渐隐(D)...</span><span>Shift+Ctrl+F</span></div>
<div class="s" style="top:102px"></div>
<div class="m" style="top:108px"><span>剪切(T)</span><span>Ctrl+X</span></div>
<div class="m" style="top:129px"><span>拷贝(C)</span><span>Ctrl+C</span></div>
<div class="m x" style="top:150px"><span>合并拷贝(Y)</span><span>Shift+Ctrl+C</span></div>
<div class="m" style="top:171px"><span>粘贴(P)</span><span>Ctrl+V</span></div>
<div class="m" style="top:193px"><span>选择性粘贴(I)</span></div><div class="r" style="top:197px"></div>
<div class="m" style="top:213px"><span>清除(E)</span></div>
<div class="s" style="top:239px"></div>
<div class="m" style="top:245px"><span>搜索</span><span>Ctrl+F</span></div>
<div class="m" style="top:266px"><span>拼写检查(H)...</span></div>
<div class="m" style="top:287px"><span>查找和替换文本(X)...</span></div>
<div class="s" style="top:313px"></div>
<div class="m" style="top:319px"><span>填充(L)...</span><span>Shift+F5</span></div>
<div class="m" style="top:340px"><span>描边(S)...</span></div>
<div class="m" style="top:361px"><span>内容识别填充...</span></div>
<div class="s" style="top:387px"></div>
<div class="m h" style="top:393px"><span>内容识别缩放</span><span>Alt+Shift+Ctrl+C</span></div>
<div class="m x" style="top:414px"><span>操控变形</span></div>
<div class="m" style="top:435px"><span>透视变形</span></div>
<div class="m" style="top:456px"><span>自由变换(F)</span><span>Ctrl+T</span></div>
<div class="m" style="top:477px"><span>变换</span></div><div class="r" style="top:481px"></div>
<div class="m x" style="top:498px"><span>自动对齐图层...</span></div>
<div class="m x" style="top:519px"><span>自动混合图层...</span></div>
<div class="s" style="top:545px"></div>
<div class="m" style="top:551px"><span>定义画笔预设(B)...</span></div>
<div class="m x" style="top:572px"><span>定义图案...</span></div>
<div class="m x" style="top:593px"><span>定义自定形状...</span></div>
<div class="s" style="top:619px"></div>
<div class="m" style="top:626px"><span>清理(R)</span></div><div class="r" style="top:630px"></div>
<div class="s" style="top:651px"></div>
<div class="m" style="top:657px"><span>Adobe PDF 预设...</span></div>
<div class="m" style="top:678px"><span>预设</span></div><div class="r" style="top:682px"></div>
<div class="m" style="top:699px"><span>远程连接...</span></div>
<div class="s" style="top:725px"></div>
<div class="m" style="top:731px"><span>颜色设置(G)...</span><span>Shift+Ctrl+K</span></div>
<div class="m" style="top:752px"><span>指定配置文件...</span></div>
<div class="m" style="top:773px"><span>转换为配置文件(V)...</span></div>
<div class="s" style="top:799px"></div>
<div class="m" style="top:805px"><span>键盘快捷键...</span><span>Alt+Shift+Ctrl+K</span></div>
<div class="m" style="top:826px"><span>菜单(U)...</span><span>Alt+Shift+Ctrl+M</span></div>
<div class="m" style="top:847px"><span>工具栏...</span></div>
<div class="m" style="top:869px"><span>首选项(N)</span></div><div class="r" style="top:873px"></div>
</div>

</body></html>
